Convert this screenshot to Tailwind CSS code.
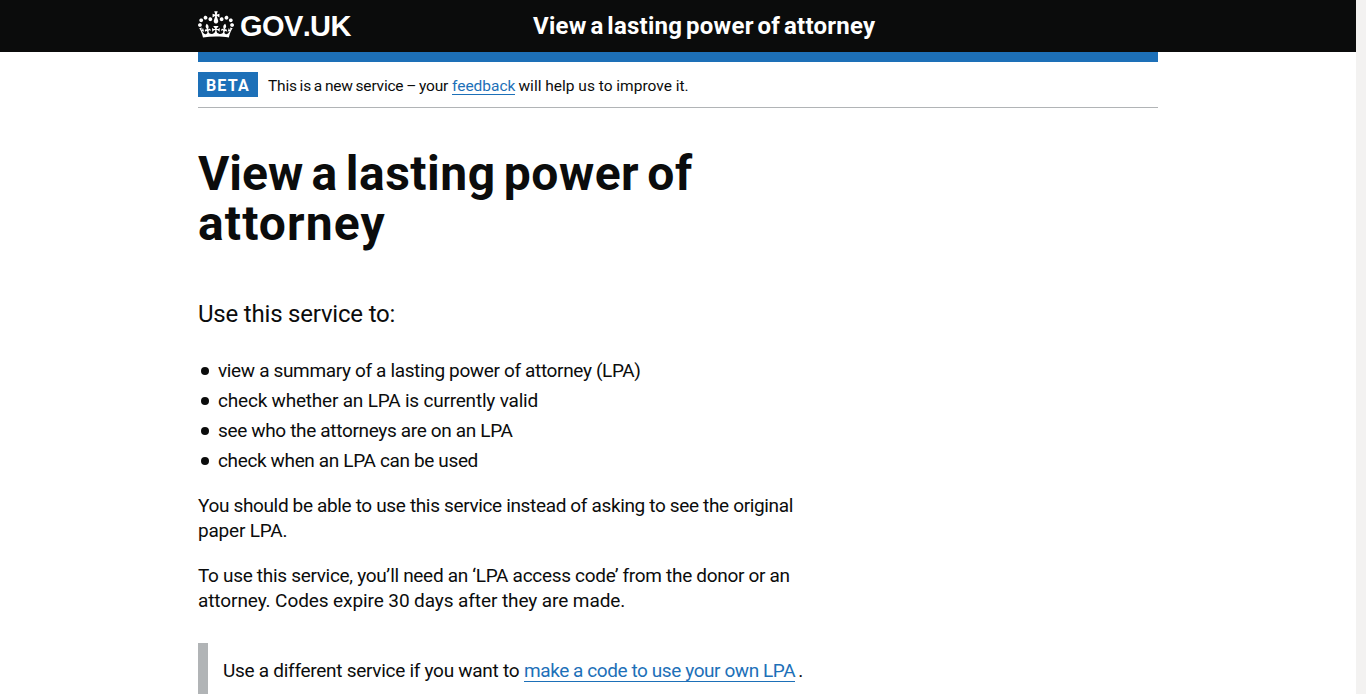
<!DOCTYPE html>
<html lang="en">
<head>
<meta charset="utf-8">
<title>View a lasting power of attorney</title>
<script src="https://cdn.jsdelivr.net/npm/@tailwindcss/browser@4"></script>
</head>
<body class="h-[694px] overflow-hidden bg-[#f3f2f1] font-['Roboto',sans-serif] text-[#0b0c0c]">
<div class="mr-[10px] h-full overflow-hidden bg-white">
  <header class="h-[52px] bg-[#0b0c0c] text-white">
    <div class="mx-auto flex h-full w-[960px] items-center">
      <a class="flex w-[335px] items-center pb-[2px]">
        <svg class="mb-px h-[27px] w-9 shrink-0" viewBox="0 0 132 97" fill="currentColor" aria-hidden="true"><path fill-rule="evenodd" d="M25 30.2c3.5 1.5 7.7-.2 9.1-3.7 1.5-3.6-.2-7.8-3.9-9.2-3.6-1.4-7.6.3-9.1 3.9-1.4 3.5.3 7.5 3.9 9zM9 39.5c3.6 1.5 7.8-.2 9.2-3.7 1.5-3.6-.2-7.8-3.9-9.1-3.6-1.5-7.6.2-9.1 3.8-1.4 3.5.3 7.5 3.8 9zM4.4 57.2c3.5 1.5 7.7-.2 9.1-3.8 1.5-3.6-.2-7.7-3.9-9.1-3.5-1.5-7.6.3-9.1 3.8-1.4 3.5.3 7.6 3.9 9.1zm38.3-21.4c3.5 1.5 7.7-.2 9.1-3.8 1.5-3.6-.2-7.7-3.9-9.1-3.6-1.5-7.6.3-9.1 3.8-1.3 3.6.4 7.7 3.9 9.1zm64.4-5.6c-3.6 1.5-7.8-.2-9.1-3.7-1.5-3.6.2-7.8 3.8-9.2 3.6-1.4 7.7.3 9.2 3.9 1.3 3.5-.4 7.5-3.9 9zm15.9 9.3c-3.6 1.5-7.7-.2-9.1-3.7-1.5-3.6.2-7.8 3.7-9.1 3.6-1.5 7.7.2 9.2 3.8 1.5 3.5-.3 7.5-3.8 9zm4.7 17.7c-3.6 1.5-7.8-.2-9.2-3.8-1.5-3.6.2-7.7 3.9-9.1 3.6-1.5 7.7.3 9.2 3.8 1.3 3.5-.4 7.6-3.9 9.1zM89.3 35.8c-3.6 1.5-7.8-.2-9.2-3.8-1.4-3.6.2-7.7 3.9-9.1 3.6-1.5 7.7.3 9.2 3.8 1.4 3.6-.3 7.7-3.9 9.1zM69.7 17.7l8.9 4.7V9.3l-8.9 2.8c-.2-.3-.5-.6-.9-.9L72.4 0H59.6l3.5 11.2c-.3.3-.6.5-.9.9l-8.8-2.8v13.1l8.8-4.7c.3.3.6.7.9.9l-5 15.4v.1c-.2.8-.4 1.6-.4 2.4 0 4.1 3.1 7.5 7 8.1h.2c.3 0 .7.1 1 .1.4 0 .7 0 1-.1h.2c4-.6 7.1-4.1 7.1-8.1 0-.8-.1-1.7-.4-2.4V34l-5.1-15.4c.4-.2.7-.6 1-.9zM66 92.8c16.9 0 32.8 1.1 47.1 3.2 4-16.9 8.9-26.7 14-33.5l-9.6-3.4c1 4.9 1.1 7.2 0 10.2-1.5-1.4-3-4.3-4.2-8.7L108.6 76c2.8-2 5-3.2 7.5-3.3-4.4 9.4-10 11.9-13.6 11.2-4.3-.8-6.3-4.6-5.6-7.9 1-4.7 5.7-5.9 8-.5 4.3-8.7-3-11.4-7.6-8.8 7.1-7.2 7.9-13.5 2.1-21.1-8 6.1-8.1 12.3-4.5 20.8-4.7-5.4-12.1-2.5-9.5 6.2 3.4-5.2 7.9-2 7.2 3.1-.6 4.3-6.4 7.8-13.5 7.2-10.3-.9-10.9-8-11.2-13.8 2.5-.5 7.1 1.8 11 7.3L80.2 60c-4.1 4.4-8 5.3-12.3 5.4 1.4-4.4 8-11.6 8-11.6H55.5s6.4 7.2 7.9 11.6c-4.2-.1-8-1-12.3-5.4l1.4 16.4c3.9-5.5 8.5-7.7 10.9-7.3-.3 5.8-.9 12.8-11.1 13.8-7.2.6-12.9-2.9-13.5-7.2-.7-5 3.8-8.3 7.1-3.1 2.7-8.7-4.6-11.6-9.4-6.2 3.7-8.5 3.6-14.7-4.6-20.8-5.8 7.6-5 13.9 2.2 21.1-4.7-2.6-11.9.1-7.7 8.8 2.3-5.5 7.1-4.2 8.1.5.7 3.3-1.3 7.1-5.7 7.9-3.5.7-9-1.8-13.5-11.2 2.5.1 4.7 1.3 7.5 3.3l-4.7-15.4c-1.2 4.4-2.7 7.2-4.3 8.7-1.1-3-.9-5.3 0-10.2l-9.5 3.4c5 6.9 9.9 16.7 14 33.5 14.8-2.1 30.8-3.2 47.7-3.2z"/></svg>
        <span class="ml-[6px] pt-[2px] font-['Liberation_Sans',sans-serif] text-[29px] leading-[30px] font-bold tracking-[-0.6px] [font-kerning:none]">GOV.UK</span>
      </a>
      <a class="text-[24px] leading-[30px] font-bold tracking-[0.25px] [word-spacing:-2.4px] whitespace-nowrap">View a lasting power of attorney</a>
    </div>
  </header>
  <div class="mx-auto w-[960px]">
    <div class="h-[10px] bg-[#1d70b8]"></div>
    <div class="flex h-[46px] items-start border-b border-[#b1b4b6] pt-[10px]">
      <strong class="h-[25px] w-[60px] bg-[#1d70b8] pl-2 text-[16px] leading-[28px] font-bold tracking-[1.15px] text-white">BETA</strong>
      <p class="ml-[10px] text-[15.5px] leading-[29px] whitespace-nowrap"><span class="tracking-[-0.2px] [word-spacing:-0.8px]">This is a new service – your</span> <a class="inline-block h-[23px] border-b border-[#1d70b8] text-[#1d70b8]">feedback</a><span class="ml-[3px]">will help us to improve it.</span></p>
    </div>
    <main class="pt-[41px]">
      <h1 class="text-[48px] leading-[50px] font-bold whitespace-nowrap"><span class="block tracking-[0.5px] [word-spacing:-4.25px]"><span class="tracking-normal">View</span> a lasting power of</span><span class="block tracking-[1.1px]">attorney</span></h1>
      <p class="mt-[50px] text-[24px] leading-[30px] tracking-[-0.2px] whitespace-nowrap">Use this service to:</p>
      <div class="mt-[29px] text-[19px] leading-[25px] whitespace-nowrap">
        <ul class="flex flex-col gap-[5px]">
          <li class="flex items-center"><i class="mr-[9px] ml-[3px] size-2 rounded-full bg-[#0b0c0c]"></i><span class="tracking-[-0.35px]">view a summary of a lasting power of attorney (LPA)</span></li>
          <li class="flex items-center"><i class="mr-[9px] ml-[3px] size-2 rounded-full bg-[#0b0c0c]"></i><span class="tracking-[-0.2px]">check whether an LPA is currently valid</span></li>
          <li class="flex items-center"><i class="mr-[9px] ml-[3px] size-2 rounded-full bg-[#0b0c0c]"></i><span class="tracking-[-0.34px]">see who the attorneys are on an LPA</span></li>
          <li class="flex items-center"><i class="mr-[9px] ml-[3px] size-2 rounded-full bg-[#0b0c0c]"></i><span class="tracking-[-0.36px]">check when an LPA can be used</span></li>
        </ul>
        <p class="mt-5"><span class="block tracking-[-0.35px]">You should be able to use this service instead of asking to see the original</span><span class="block tracking-[-0.2px]">paper LPA.</span></p>
        <p class="mt-5"><span class="block tracking-[-0.31px]">To use this service, you’ll need an ‘LPA access code’ from the donor or an</span><span class="block tracking-[-0.09px]">attorney. Codes expire 30 days after they are made.</span></p>
        <div class="mt-[30px] h-20 border-l-[10px] border-[#b1b4b6] pt-[15px] pl-[15px]"><span class="tracking-[-0.28px]">Use a different service if you want to</span> <a class="inline-block h-6 border-b border-[#1d70b8] tracking-[-0.42px] text-[#1d70b8]">make a code to use your own LPA</a><span class="ml-[3px]">.</span></div>
      </div>
    </main>
  </div>
</div>
</body>
</html>
